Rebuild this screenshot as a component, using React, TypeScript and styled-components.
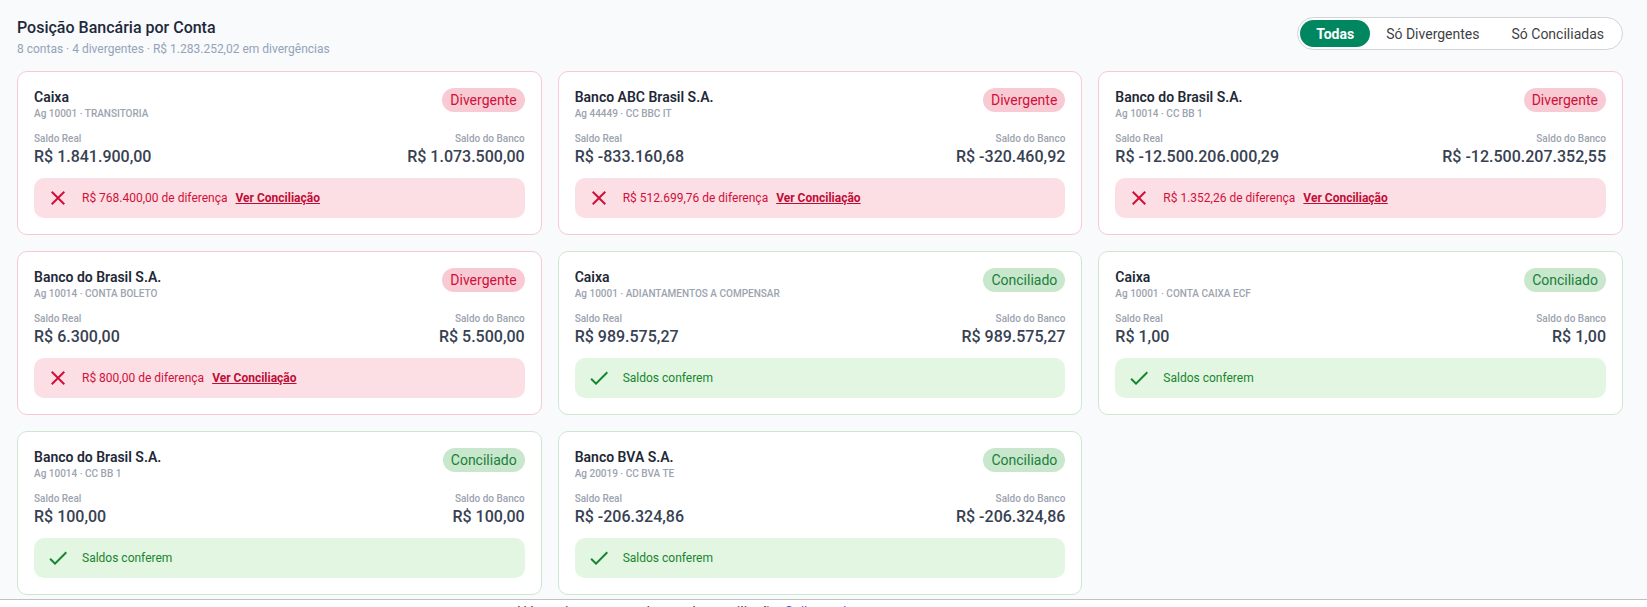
import React from 'react';
import styled, { createGlobalStyle } from 'styled-components';

const GlobalStyle = createGlobalStyle`
    html, body {
        margin: 0;
        padding: 0;
        background: #f8fafc;
        font-family: Roboto, "Noto Sans", "Liberation Sans", sans-serif;
        overflow: hidden;
    }
    * {
        box-sizing: border-box;
    }
`;

const Page = styled.div`
    width: 1647px;
    height: 607px;
    display: flex;
    flex-direction: column;
    overflow: hidden;
`;

const Content = styled.div`
    padding: 16px 24px 0 17px;
`;

const Header = styled.div`
    display: flex;
    justify-content: space-between;
    align-items: center;
    margin-bottom: 14px;
`;

const TitleBlock = styled.div`
    display: flex;
    flex-direction: column;
    padding-top: 2px;
`;

const Title = styled.h1`
    margin: 0;
    font-size: 16px;
    line-height: 20px;
    font-weight: 500;
    color: #1e293b;
`;

const Subtitle = styled.div`
    margin-top: 3px;
    font-size: 12px;
    line-height: 16px;
    color: #94a3b8;
`;

const Toggle = styled.div`
    display: flex;
    align-items: center;
    padding: 2px;
    border: 1px solid #d4d4d8;
    border-radius: 999px;
    background: #ffffff;
    margin-top: -6px;
`;

const ToggleButton = styled.button<{ $active?: boolean }>`
    height: 27px;
    padding: 0 16px;
    border: none;
    border-radius: 999px;
    font-family: inherit;
    font-size: 14px;
    font-weight: ${(p) => (p.$active ? 700 : 400)};
    color: ${(p) => (p.$active ? '#ffffff' : '#3f3f46')};
    background: ${(p) => (p.$active ? '#00875f' : 'transparent')};
    cursor: pointer;
`;

const Grid = styled.div`
    display: grid;
    grid-template-columns: repeat(3, 1fr);
    column-gap: 16px;
    row-gap: 16px;
`;

const Card = styled.div<{ $ok: boolean }>`
    background: #ffffff;
    border: 1px solid ${(p) => (p.$ok ? '#cde8d0' : '#f7c9d3')};
    border-radius: 10px;
    padding: 16px;
`;

const CardHead = styled.div`
    display: flex;
    justify-content: space-between;
    align-items: flex-start;
`;

const Name = styled.div`
    font-size: 14px;
    line-height: 18px;
    font-weight: 600;
    color: #1f2937;
`;

const Meta = styled.div`
    margin-top: 1px;
    font-size: 10px;
    line-height: 14px;
    font-weight: 500;
    color: #9ca3af;
`;

const Badge = styled.span<{ $ok: boolean }>`
    height: 24px;
    padding: 0 8px;
    display: inline-flex;
    align-items: center;
    border-radius: 12px;
    font-size: 14px;
    color: ${(p) => (p.$ok ? '#18803a' : '#d0103a')};
    background: ${(p) => (p.$ok ? '#c9e7cd' : '#f8cbd4')};
`;

const Balances = styled.div`
    display: flex;
    justify-content: space-between;
    margin-top: 11px;
`;

const Balance = styled.div<{ $right?: boolean }>`
    display: flex;
    flex-direction: column;
    align-items: ${(p) => (p.$right ? 'flex-end' : 'flex-start')};
`;

const Label = styled.div`
    font-size: 10px;
    line-height: 14px;
    font-weight: 500;
    color: #9ca3af;
`;

const Amount = styled.div`
    font-size: 16px;
    line-height: 22px;
    font-weight: 500;
    color: #374151;
`;

const Status = styled.div<{ $ok: boolean }>`
    margin-top: 10px;
    height: 40px;
    display: flex;
    align-items: center;
    gap: 12px;
    padding: 0 12px;
    border-radius: 10px;
    font-size: 12px;
    color: ${(p) => (p.$ok ? '#17852f' : '#d0103a')};
    background: ${(p) => (p.$ok ? '#e3f6e2' : '#fcdfe4')};
`;

const Link = styled.a`
    margin-left: 8px;
    font-weight: 700;
    color: #c00c36;
    text-decoration: underline;
    cursor: pointer;
`;

const Footer = styled.div`
    margin-top: 4px;
    flex: 1;
    background: #ffffff;
    border-top: 1px solid #c2c2c2;
    padding: 3px 0 0 505px;
    font-size: 14px;
    line-height: 18px;
    color: #374151;
    white-space: nowrap;
`;

const FooterLink = styled.span`
    color: #2563eb;
`;

const CloseIcon = () => (
    <svg width="24" height="24" viewBox="0 0 24 24" fill="#d0103a">
        <path d="M19 6.41 17.59 5 12 10.59 6.41 5 5 6.41 10.59 12 5 17.59 6.41 19 12 13.41 17.59 19 19 17.59 13.41 12z" />
    </svg>
);

const CheckIcon = () => (
    <svg width="24" height="24" viewBox="0 0 24 24" fill="#17852f">
        <path d="M9 16.17 4.83 12l-1.42 1.41L9 19 21 7l-1.41-1.41z" />
    </svg>
);

interface IConta {
    banco: string;
    ag: string;
    conta: string;
    real: string;
    banco_saldo: string;
    diff?: string;
}

const contas: IConta[] = [
    { banco: 'Caixa', ag: '10001', conta: 'TRANSITORIA', real: 'R$ 1.841.900,00', banco_saldo: 'R$ 1.073.500,00', diff: 'R$ 768.400,00' },
    { banco: 'Banco ABC Brasil S.A.', ag: '44449', conta: 'CC BBC IT', real: 'R$ -833.160,68', banco_saldo: 'R$ -320.460,92', diff: 'R$ 512.699,76' },
    { banco: 'Banco do Brasil S.A.', ag: '10014', conta: 'CC BB 1', real: 'R$ -12.500.206.000,29', banco_saldo: 'R$ -12.500.207.352,55', diff: 'R$ 1.352,26' },
    { banco: 'Banco do Brasil S.A.', ag: '10014', conta: 'CONTA BOLETO', real: 'R$ 6.300,00', banco_saldo: 'R$ 5.500,00', diff: 'R$ 800,00' },
    { banco: 'Caixa', ag: '10001', conta: 'ADIANTAMENTOS A COMPENSAR', real: 'R$ 989.575,27', banco_saldo: 'R$ 989.575,27' },
    { banco: 'Caixa', ag: '10001', conta: 'CONTA CAIXA ECF', real: 'R$ 1,00', banco_saldo: 'R$ 1,00' },
    { banco: 'Banco do Brasil S.A.', ag: '10014', conta: 'CC BB 1', real: 'R$ 100,00', banco_saldo: 'R$ 100,00' },
    { banco: 'Banco BVA S.A.', ag: '20019', conta: 'CC BVA TE', real: 'R$ -206.324,86', banco_saldo: 'R$ -206.324,86' },
];

const ContaCard: React.FC<{ conta: IConta }> = ({ conta }) => {
    const ok = !conta.diff;
    return (
        <Card $ok={ok}>
            <CardHead>
                <div>
                    <Name>{conta.banco}</Name>
                    <Meta>Ag {conta.ag} · {conta.conta}</Meta>
                </div>
                <Badge $ok={ok}>{ok ? 'Conciliado' : 'Divergente'}</Badge>
            </CardHead>
            <Balances>
                <Balance>
                    <Label>Saldo Real</Label>
                    <Amount>{conta.real}</Amount>
                </Balance>
                <Balance $right>
                    <Label>Saldo do Banco</Label>
                    <Amount>{conta.banco_saldo}</Amount>
                </Balance>
            </Balances>
            <Status $ok={ok}>
                {ok ? <CheckIcon /> : <CloseIcon />}
                {ok ? (
                    <span>Saldos conferem</span>
                ) : (
                    <span>
                        {conta.diff} de diferença
                        <Link>Ver Conciliação</Link>
                    </span>
                )}
            </Status>
        </Card>
    );
};

const App: React.FC = () => {
    return (
        <Page>
            <GlobalStyle />
            <Content>
                <Header>
                    <TitleBlock>
                        <Title>Posição Bancária por Conta</Title>
                        <Subtitle>8 contas · 4 divergentes · R$ 1.283.252,02 em divergências</Subtitle>
                    </TitleBlock>
                    <Toggle>
                        <ToggleButton $active>Todas</ToggleButton>
                        <ToggleButton>Só Divergentes</ToggleButton>
                        <ToggleButton>Só Conciliadas</ToggleButton>
                    </Toggle>
                </Header>
                <Grid>
                    {contas.map((c, i) => (
                        <ContaCard conta={c} key={i} />
                    ))}
                </Grid>
            </Content>
            <Footer>
                ● Há movimentos pendentes de conciliação. <FooterLink>Saiba mais</FooterLink>
            </Footer>
        </Page>
    );
};

export default App;
